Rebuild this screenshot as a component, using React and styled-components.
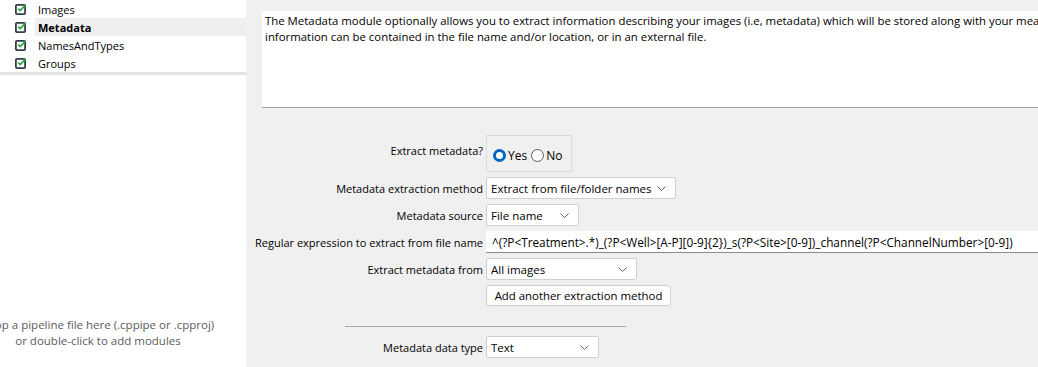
import styled, { createGlobalStyle } from "styled-components";

const GlobalStyle = createGlobalStyle`
  html, body {
    margin: 0;
    padding: 0;
    overflow: hidden;
    background: #f0f0f0;
  }
  body {
    font-family: "Open Sans", "Noto Sans", sans-serif;
    font-size: 11px;
    color: #000;
  }
`;

const Page = styled.div`
  display: flex;
  width: 1038px;
  height: 367px;
  overflow: hidden;
`;

const Sidebar = styled.div`
  width: 246px;
  flex: none;
  display: flex;
  flex-direction: column;
  background: #e3e3e3;
`;

const ModuleList = styled.div`
  background: #fff;
  height: 72px;
  display: flex;
  flex-direction: column;
`;

const ModuleRow = styled.div`
  height: 18px;
  display: flex;
  align-items: center;
  padding-left: 15px;
  gap: 11px;
`;

const ModuleName = styled.span`
  flex: 1;
  align-self: stretch;
  display: flex;
  align-items: center;
  padding-left: 3px;
  margin-left: -3px;
  font-weight: ${(p) => (p.$active ? 700 : 400)};
  background: ${(p) => (p.$active ? "#efefef" : "transparent")};
`;

const DropZone = styled.div`
  flex: 1;
  margin-top: 3px;
  background: #fff;
  display: flex;
  flex-direction: column;
  justify-content: flex-end;
  padding-bottom: 18px;
`;

const DropHint = styled.div`
  width: 196px;
  white-space: nowrap;
  color: #5c5c5c;
  font-size: 11.5px;
  line-height: 16px;
  display: flex;
  flex-direction: column;
  align-items: center;
`;

const Main = styled.div`
  flex: 1;
  display: flex;
  flex-direction: column;
  padding-top: 11px;
  min-width: 0;
`;

const Description = styled.div`
  margin-left: 16px;
  width: 1000px;
  height: 97px;
  background: #fff;
  border-bottom: 1px solid #a0a0a0;
  padding: 2px 3px;
  box-sizing: border-box;
  font-size: 11.4px;
  line-height: 16px;
  white-space: nowrap;
`;

const Form = styled.div`
  display: grid;
  grid-template-columns: 237px minmax(0, 1fr);
  column-gap: 3px;
  row-gap: 5px;
  margin-top: 27px;
  align-items: center;
`;

const Label = styled.div`
  text-align: right;
  white-space: nowrap;
  align-self: ${(p) => (p.$top ? "start" : "center")};
  padding-top: ${(p) => (p.$top ? "8px" : "0")};
`;

const RadioBox = styled.div`
  width: 86px;
  height: 37px;
  box-sizing: border-box;
  border: 1px solid #dcdcdc;
  display: flex;
  align-items: center;
  padding: 3px 0 0 6px;
  gap: 4px;
`;

const RadioOption = styled.label`
  display: flex;
  align-items: center;
  gap: 2px;
  font-size: 12px;
`;

const RadioDot = styled.span`
  width: 13px;
  height: 13px;
  box-sizing: border-box;
  border-radius: 50%;
  border: ${(p) => (p.$on ? "3.5px solid #0067c0" : "1px solid #5a5a5a")};
  background: #fff;
`;

const Select = styled.div`
  width: ${(p) => p.$w}px;
  height: 22px;
  box-sizing: border-box;
  background: #fff;
  border: 1px solid #d0d0d0;
  border-radius: 2px;
  display: flex;
  align-items: center;
  justify-content: space-between;
  padding: 0 9px 0 4px;
  font-size: 11.5px;
  white-space: nowrap;
`;

const TextInput = styled.div`
  height: 22px;
  box-sizing: border-box;
  background: #fff;
  border-bottom: 1px solid #8a8a8a;
  display: flex;
  align-items: center;
  padding-left: 6px;
  font-size: 11.8px;
  white-space: nowrap;
  overflow: hidden;
`;

const Button = styled.div`
  width: 185px;
  height: 21px;
  box-sizing: border-box;
  background: #fdfdfd;
  border: 1px solid #d0d0d0;
  border-radius: 3px;
  display: flex;
  align-items: center;
  justify-content: center;
  font-size: 11.4px;
`;

const Divider = styled.div`
  grid-column: 1 / span 2;
  margin: 15px 0 4px 99px;
  width: 281px;
  height: 1px;
  background: #a8a8a8;
`;

const CheckIcon = () => (
  <svg width="12" height="12" viewBox="0 0 12 12">
    <rect x="0.9" y="1.9" width="9.2" height="9.2" rx="1" fill="#fff" stroke="#343e4a" strokeWidth="1.8" />
    <path d="M3.3 5.7 L5.2 7.6 L10.6 2.2" fill="none" stroke="#22a83c" strokeWidth="1.8" />
  </svg>
);

const Chevron = () => (
  <svg width="9" height="5" viewBox="0 0 9 5">
    <path d="M0.5 0.5 L4.5 4.5 L8.5 0.5" fill="none" stroke="#606060" strokeWidth="1" />
  </svg>
);

const modules = ["Images", "Metadata", "NamesAndTypes", "Groups"];

const App = () => {
  return (
    <Page>
      <GlobalStyle />
      <Sidebar>
        <ModuleList>
          {modules.map((m) => (
            <ModuleRow key={m}>
              <CheckIcon />
              <ModuleName $active={m === "Metadata"}>{m}</ModuleName>
            </ModuleRow>
          ))}
        </ModuleList>
        <DropZone>
          <DropHint>
            <span>Drop a pipeline file here (.cppipe or .cpproj)</span>
            <span>or double-click to add modules</span>
          </DropHint>
        </DropZone>
      </Sidebar>
      <Main>
        <Description>
          The Metadata module optionally allows you to extract information describing your images (i.e, metadata) which will be stored along with your measurements. This
          <br />
          information can be contained in the file name and/or location, or in an external file.
        </Description>
        <Form>
          <Label $top>Extract metadata?</Label>
          <RadioBox>
            <RadioOption>
              <RadioDot $on />
              Yes
            </RadioOption>
            <RadioOption>
              <RadioDot />
              No
            </RadioOption>
          </RadioBox>

          <Label>Metadata extraction method</Label>
          <Select $w={190}>
            Extract from file/folder names
            <Chevron />
          </Select>

          <Label>Metadata source</Label>
          <Select $w={93}>
            File name
            <Chevron />
          </Select>

          <Label>Regular expression to extract from file name</Label>
          <TextInput>
            {"^(?P<Treatment>.*)_(?P<Well>[A-P][0-9]{2})_s(?P<Site>[0-9])_channel(?P<ChannelNumber>[0-9])"}
          </TextInput>

          <Label>Extract metadata from</Label>
          <Select $w={151}>
            All images
            <Chevron />
          </Select>

          <div />
          <Button>Add another extraction method</Button>

          <Divider />

          <Label>Metadata data type</Label>
          <Select $w={113}>
            Text
            <Chevron />
          </Select>
        </Form>
      </Main>
    </Page>
  );
};

export default App;
